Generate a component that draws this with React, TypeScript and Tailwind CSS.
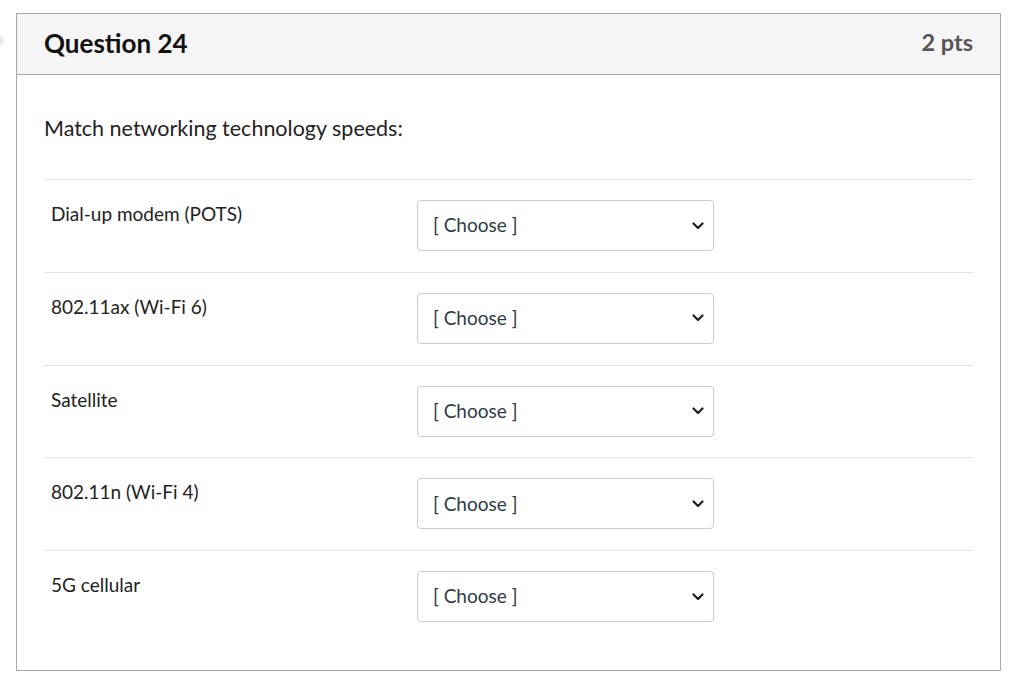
import React from "react";

const rows = [
  "Dial-up modem (POTS)",
  "802.11ax (Wi-Fi 6)",
  "Satellite",
  "802.11n (Wi-Fi 4)",
  "5G cellular",
];

function Chevron() {
  return (
    <svg width="12" height="8" viewBox="0 0 12 8" className="block">
      <path d="M1.5 1.5 L6 6 L10.5 1.5" fill="none" stroke="#1f1f1f" strokeWidth="2.2" strokeLinecap="round" strokeLinejoin="round" />
    </svg>
  );
}

function ChooseSelect() {
  return (
    <div className="w-[297px] h-[51px] border border-[#c7cdd1] rounded-[4px] bg-white flex items-center justify-between pl-[15px] pr-[9px]">
      <span className="text-[19px] text-[#2d3b45]">[ Choose ]</span>
      <Chevron />
    </div>
  );
}

export default function App() {
  return (
    <div
      className="relative min-h-[691px] w-[1018px] bg-white pt-[13px] pl-[16px]"
      style={{ fontFamily: "Lato, 'Open Sans', sans-serif" }}
    >
      {/* partially visible marker at the left edge */}
      <div className="absolute left-[-6px] top-[35px] w-[10px] h-[11px] rounded-full bg-[#ececec]" />

      <div className="w-[985px] h-[658px] border border-[#a9a9a9] flex flex-col">
        <div className="h-[61px] bg-[#f5f5f5] border-b border-[#a9a9a9] flex items-center justify-between pl-[27px] pr-[27px]">
          <h2 className="text-[26px] font-bold text-[#111] leading-none -mt-[3px]">Question 24</h2>
          <span className="text-[23.5px] font-bold text-[#555] leading-none -mt-[3px]">2 pts</span>
        </div>

        <div className="px-[27px] pt-[39px]">
          <p className="text-[21.5px] text-[#222] leading-[28px]">Match networking technology speeds:</p>

          <div className="mt-[37px]">
            {rows.map((label) => (
              <div key={label} className="flex border-t border-[#e2e2e2] pt-[20px] pb-[20.75px]">
                <div className="w-[373px] pl-[7px] pt-[2px] text-[19px] text-[#222] leading-[24px]">
                  {label}
                </div>
                <ChooseSelect />
              </div>
            ))}
          </div>
        </div>
      </div>
    </div>
  );
}
